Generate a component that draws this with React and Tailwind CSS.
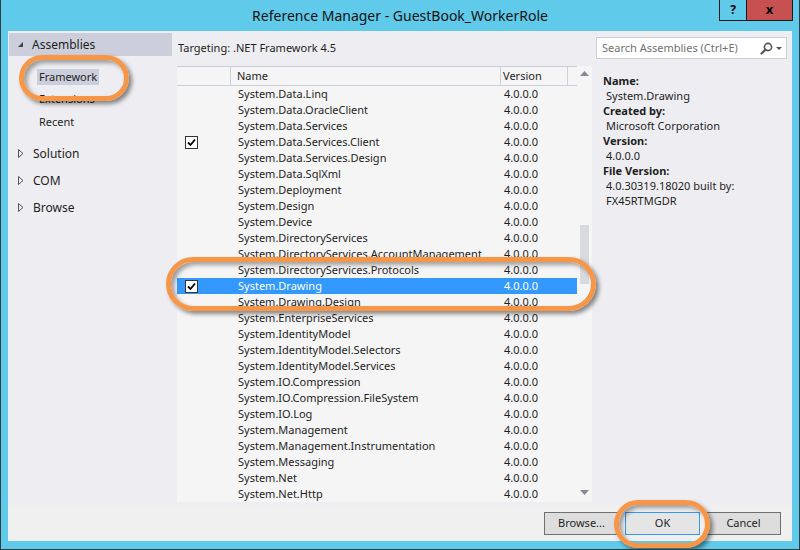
import React from "react";

const rows = [
  "System.Data.Linq",
  "System.Data.OracleClient",
  "System.Data.Services",
  "System.Data.Services.Client",
  "System.Data.Services.Design",
  "System.Data.SqlXml",
  "System.Deployment",
  "System.Design",
  "System.Device",
  "System.DirectoryServices",
  "System.DirectoryServices.AccountManagement",
  "System.DirectoryServices.Protocols",
  "System.Drawing",
  "System.Drawing.Design",
  "System.EnterpriseServices",
  "System.IdentityModel",
  "System.IdentityModel.Selectors",
  "System.IdentityModel.Services",
  "System.IO.Compression",
  "System.IO.Compression.FileSystem",
  "System.IO.Log",
  "System.Management",
  "System.Management.Instrumentation",
  "System.Messaging",
  "System.Net",
  "System.Net.Http",
];
const checked = new Set([3, 12]);
const selected = 12;

function Check() {
  return (
    <div className="w-[13px] h-[13px] border border-[#333] bg-white flex items-center justify-center">
      <svg width="9" height="9" viewBox="0 0 9 9">
        <path d="M1 4.5 L3.5 7 L8 1.5" fill="none" stroke="#000" strokeWidth="1.8" />
      </svg>
    </div>
  );
}

function Expanded() {
  return (
    <svg width="7" height="7" viewBox="0 0 7 7">
      <path d="M6 1 L6 6 L1 6 Z" fill="#444" />
    </svg>
  );
}

function Collapsed() {
  return (
    <svg width="6" height="9" viewBox="0 0 6 9">
      <path d="M0.5 0.5 L5 4.5 L0.5 8.5 Z" fill="none" stroke="#555" strokeWidth="1" />
    </svg>
  );
}

function Ring({ className }) {
  return (
    <div
      className={
        "absolute border-[5px] border-[#f79646] rounded-full shadow-[3px_3px_4px_rgba(0,0,0,0.45),inset_3px_3px_4px_rgba(0,0,0,0.35)] " +
        className
      }
    />
  );
}

export default function App() {
  return (
    <div className="relative w-[800px] h-[550px] bg-[#5fcaea] border-x border-b border-[#2f3c42] flex flex-col font-['Noto_Sans',sans-serif] text-[#1e1e1e] overflow-hidden">
      {/* Title bar */}
      <div className="relative h-[31px] flex items-center justify-center">
        <span className="text-[14px] text-[#111] pb-[1px]">Reference Manager - GuestBook_WorkerRole</span>
        <div className="absolute top-0 right-[6px] flex">
          <div className="w-[28px] h-[21px] border border-[#1a1a1a] border-t-0 flex items-center justify-center text-[12px] font-bold text-black">?</div>
          <div className="w-[46px] h-[21px] bg-[#c75050] border-b border-r border-[#1a1a1a] flex items-center justify-center text-[13px] font-bold text-black">x</div>
        </div>
      </div>

      {/* Content */}
      <div className="flex-1 mx-[7px] mb-[8px] bg-[#eeeef2] flex flex-col text-[11px]">
        <div className="flex-1 flex">
          {/* Left nav */}
          <div className="w-[164px] pt-[2px] pl-[1px]">
            <div className="h-[23px] bg-[#cccedb] flex items-center pl-[8px]">
              <Expanded />
              <span className="ml-[8px] text-[12px]">Assemblies</span>
            </div>
            <div className="mt-[9px] flex flex-col">
              <div className="h-[23px] flex items-center pl-[28px]">
                <span className="bg-[#cccedb] px-[2px] h-[16px] leading-[16px]">Framework</span>
              </div>
              <div className="h-[23px] flex items-center pl-[30px]">Extensions</div>
              <div className="h-[23px] flex items-center pl-[30px]">Recent</div>
            </div>
            <div className="mt-[6px] flex flex-col">
              {["Solution", "COM", "Browse"].map((t) => (
                <div key={t} className="h-[27px] flex items-center pl-[9px]">
                  <Collapsed />
                  <span className="ml-[9px] text-[12px]">{t}</span>
                </div>
              ))}
            </div>
          </div>

          {/* Middle */}
          <div className="w-[420px] flex flex-col">
            <div className="pt-[9px] pl-[6px] h-[25px] leading-[16px]">Targeting: .NET Framework 4.5</div>
            <div className="mt-[10px] ml-[5px] w-[415px] flex bg-[#f5f5f5]">
              <div className="w-[400px] flex flex-col">
                <div className="h-[20px] border-y border-[#cccedb] flex items-center">
                  <div className="w-[54px] h-full border-r border-[#cccedb]" />
                  <div className="w-[270px] h-full border-r border-[#cccedb] pl-[6px] flex items-center">Name</div>
                  <div className="w-[67px] h-full border-r border-[#cccedb] pl-[2px] flex items-center">Version</div>
                </div>
                {rows.map((r, i) => (
                  <div
                    key={r}
                    className={
                      "h-[16px] flex items-center " +
                      (i === selected ? "bg-[#3399ff] text-white" : "")
                    }
                  >
                    <div className="w-[55px] pl-[8px] flex items-center">{checked.has(i) ? <Check /> : null}</div>
                    <div className="w-[272px] pl-[6px] whitespace-nowrap overflow-hidden">{r}</div>
                    <div>4.0.0.0</div>
                  </div>
                ))}
              </div>
              <div className="relative w-[15px] flex flex-col items-center">
                <svg className="mt-[5px]" width="9" height="5" viewBox="0 0 9 5">
                  <path d="M0 5 L4.5 0 L9 5 Z" fill="#868999" />
                </svg>
                <div className="mt-[149px] w-[9px] h-[59px] bg-[#d9dae0]" />
                <div className="flex-1" />
                <svg className="mb-[7px]" width="9" height="5" viewBox="0 0 9 5">
                  <path d="M0 0 L9 0 L4.5 5 Z" fill="#868999" />
                </svg>
              </div>
            </div>
          </div>

          {/* Right */}
          <div className="flex-1 flex flex-col">
            <div className="mt-[6px] ml-[4px] w-[191px] h-[22px] bg-white border border-[#cccedb] flex items-center pl-[5px] pr-[4px]">
              <span className="flex-1 text-[#717171]">Search Assemblies (Ctrl+E)</span>
              <svg width="13" height="13" viewBox="0 0 13 13">
                <circle cx="8" cy="5" r="3.6" fill="none" stroke="#555" strokeWidth="1.6" />
                <path d="M5.4 7.6 L1.5 11.5" stroke="#555" strokeWidth="2.2" strokeLinecap="round" />
              </svg>
              <svg className="ml-[3px]" width="6" height="3" viewBox="0 0 6 3">
                <path d="M0 0 L6 0 L3 3 Z" fill="#555" />
              </svg>
            </div>
            <div className="mt-[14px] pl-[11px] flex flex-col leading-[15px]">
              <span className="font-bold">Name:</span>
              <span className="pl-[3px]">System.Drawing</span>
              <span className="font-bold">Created by:</span>
              <span className="pl-[3px]">Microsoft Corporation</span>
              <span className="font-bold">Version:</span>
              <span className="pl-[3px]">4.0.0.0</span>
              <span className="font-bold">File Version:</span>
              <span className="pl-[3px]">4.0.30319.18020 built by:</span>
              <span className="pl-[3px]">FX45RTMGDR</span>
            </div>
          </div>
        </div>

        {/* Footer */}
        <div className="h-[36px] bg-[#f0f0f0] flex items-center justify-end gap-[6px] pr-[11px]">
          <div className="w-[75px] h-[23px] bg-[#dddddd] border border-[#707070] flex items-center justify-center">Browse...</div>
          <div className="w-[75px] h-[23px] bg-[#e5e5e5] border border-[#3399ff] flex items-center justify-center">OK</div>
          <div className="w-[75px] h-[23px] bg-[#dddddd] border border-[#707070] flex items-center justify-center">Cancel</div>
        </div>
      </div>

      {/* Annotation rings */}
      <Ring className="left-[18px] top-[55px] w-[110px] h-[46px]" />
      <Ring className="left-[165px] top-[257px] w-[430px] h-[54px]" />
      <Ring className="left-[613px] top-[500px] w-[96px] h-[48px]" />
    </div>
  );
}
